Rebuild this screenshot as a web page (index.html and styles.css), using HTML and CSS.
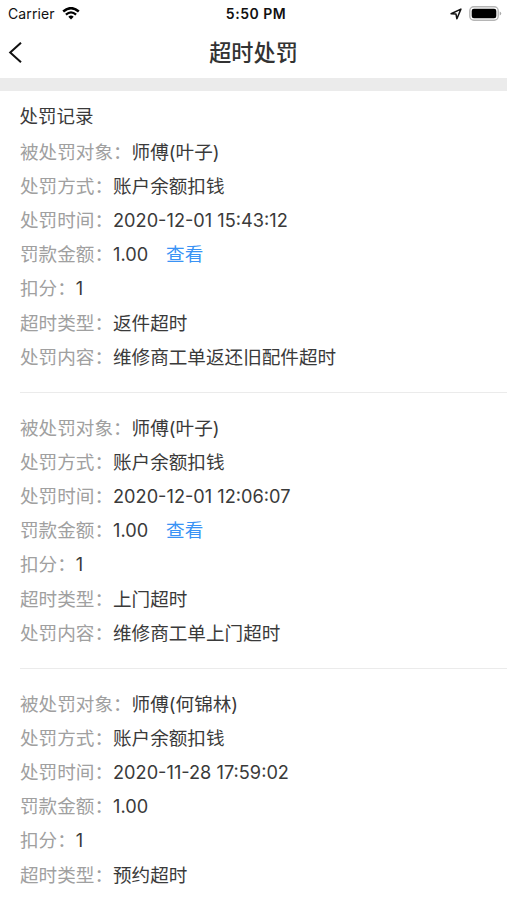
FILE: index.html
```html
<!DOCTYPE html>
<html lang="zh-CN">
<head>
    <title>超时处罚</title>
    <meta charset="utf-8">
    <meta name="viewport" content="width=device-width, initial-scale=1">
    <link rel="stylesheet" href="styles.css">
</head>

<body>
    <div class="status-bar">
        <div class="carrier">
            <span>Carrier</span>
            <svg class="wifi" width="18" height="13" viewBox="0 0 18 13">
                <path d="M1.2 4.5 Q9 -2.2 16.8 4.5" fill="none" stroke="#000" stroke-width="2.5"/>
                <path d="M3.9 7.6 Q9 3.2 14.1 7.6" fill="none" stroke="#000" stroke-width="2.3"/>
                <path d="M6.3 9.7 Q9 7.4 11.7 9.7 L9 12.4 Z"/>
            </svg>
        </div>
        <div class="clock">5:50 PM</div>
        <div class="indicators">
            <svg width="12" height="12" viewBox="0 0 12 12">
                <path d="M1.1 5.8 L10.9 1.1 L6.9 10.8 L6 6.1 Z" fill="none" stroke="#111" stroke-width="1.5" stroke-linejoin="round"/>
            </svg>
            <svg width="33" height="15" viewBox="0 0 33 15">
                <rect x="0.8" y="0.8" width="28.4" height="13.4" rx="4" fill="none" stroke="#b5b5b5" stroke-width="1.4"/>
                <rect x="2.7" y="2.7" width="24.6" height="9.6" rx="2.2"/>
                <path d="M30.7 5.5 Q32.2 6 32.2 7.5 Q32.2 9 30.7 9.5 Z" fill="#aaa"/>
            </svg>
        </div>
    </div>

    <div class="nav-bar">
        <svg class="back" width="14" height="22" viewBox="0 0 14 22">
            <path d="M13 0.7 L2.2 10.5 L13 20.3" fill="none" stroke="#111" stroke-width="2"/>
        </svg>
        <h1>超时处罚</h1>
    </div>

    <div class="content">
        <h2>处罚记录</h2>
        <div class="record">
            <div class="row"><span class="label">被处罚对象：</span><span>师傅(叶子)</span></div>
            <div class="row"><span class="label">处罚方式：</span><span>账户余额扣钱</span></div>
            <div class="row"><span class="label">处罚时间：</span><span class="num">2020-12-01 15:43:12</span></div>
            <div class="row"><span class="label">罚款金额：</span><span class="num">1.00</span><a class="link">查看</a></div>
            <div class="row"><span class="label">扣分：</span><span class="num">1</span></div>
            <div class="row"><span class="label">超时类型：</span><span>返件超时</span></div>
            <div class="row"><span class="label">处罚内容：</span><span>维修商工单返还旧配件超时</span></div>
        </div>
        <div class="record">
            <div class="row"><span class="label">被处罚对象：</span><span>师傅(叶子)</span></div>
            <div class="row"><span class="label">处罚方式：</span><span>账户余额扣钱</span></div>
            <div class="row"><span class="label">处罚时间：</span><span class="num">2020-12-01 12:06:07</span></div>
            <div class="row"><span class="label">罚款金额：</span><span class="num">1.00</span><a class="link">查看</a></div>
            <div class="row"><span class="label">扣分：</span><span class="num">1</span></div>
            <div class="row"><span class="label">超时类型：</span><span>上门超时</span></div>
            <div class="row"><span class="label">处罚内容：</span><span>维修商工单上门超时</span></div>
        </div>
        <div class="record">
            <div class="row"><span class="label">被处罚对象：</span><span>师傅(何锦林)</span></div>
            <div class="row"><span class="label">处罚方式：</span><span>账户余额扣钱</span></div>
            <div class="row"><span class="label">处罚时间：</span><span class="num">2020-11-28 17:59:02</span></div>
            <div class="row"><span class="label">罚款金额：</span><span class="num">1.00</span></div>
            <div class="row"><span class="label">扣分：</span><span class="num">1</span></div>
            <div class="row"><span class="label">超时类型：</span><span>预约超时</span></div>
        </div>
    </div>
</body>

</html>
```

FILE: styles.css
```css
body {
    margin: 0;
    font-family: Inter, 'Noto Sans CJK SC', sans-serif;
    font-size: 18.6px;
    color: #3a3a3a;
    background-color: #fff;
}

.status-bar {
    display: grid;
    grid-template-columns: 1fr auto 1fr;
    align-items: center;
    height: 27px;
    padding: 0 5px 0 8px;
    font-size: 14px;
    color: #111;
}

.carrier {
    display: flex;
    align-items: center;
    gap: 7px;
    letter-spacing: 0.1px;
}

.clock {
    padding-left: 2px;
    font-weight: 600;
    letter-spacing: 0.5px;
}

.indicators {
    display: flex;
    align-items: center;
    justify-content: flex-end;
    gap: 7px;
}

.nav-bar {
    display: grid;
    grid-template-columns: 40px 1fr 40px;
    align-items: center;
    height: 51px;
    border-bottom: 13px solid #ebebeb;
}

.back {
    margin-left: 8px;
}

h1 {
    margin: 0;
    font-size: 22.2px;
    font-weight: 500;
    line-height: 50px;
    text-align: center;
    color: #333;
}

.content {
    padding-left: 20px;
}

h2 {
    margin: 0 0 0 -0.5px;
    padding-top: 8px;
    font-size: 18.5px;
    font-weight: 400;
    line-height: 35.6px;
}

.record {
    height: 257px;
    margin-bottom: 18px;
    border-bottom: 1px solid #ebebeb;
}

.record:last-child {
    height: auto;
    margin-bottom: 0;
    border-bottom: none;
}

.row {
    display: flex;
    height: 34.2px;
    line-height: 34.2px;
    white-space: nowrap;
}

.label {
    color: #a0a0a0;
}

.num {
    font-size: 18.2px;
}

.link {
    margin-left: 18px;
    color: #3a93f5;
}
```
